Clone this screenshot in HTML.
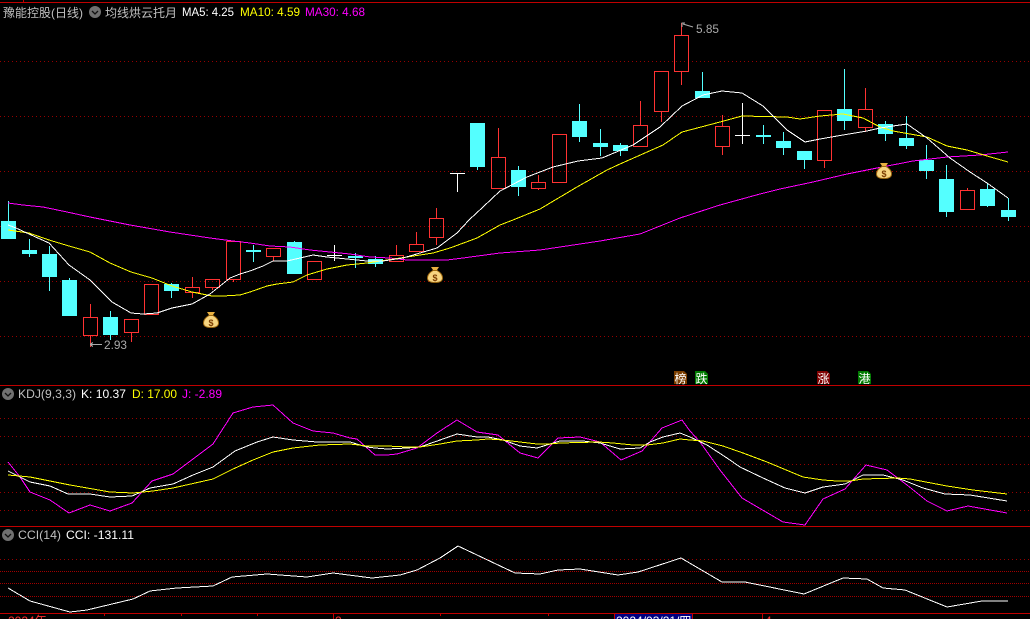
<!DOCTYPE html>
<html><head><meta charset="utf-8"><style>
html,body{margin:0;padding:0;background:#000;width:1030px;height:619px;overflow:hidden}
svg{display:block}
text{font-family:"Liberation Sans","WenQuanYi Zen Hei","Noto Sans CJK SC",sans-serif;font-size:12px}
.cn{font-family:"WenQuanYi Zen Hei","Liberation Sans","Noto Sans CJK SC",sans-serif;font-size:12px}
.g{stroke:#960000;stroke-width:1;stroke-dasharray:1 3;fill:none;shape-rendering:crispEdges}
.g2{stroke:#a00000;stroke-width:1;stroke-dasharray:1 1;fill:none;shape-rendering:crispEdges}
.l{fill:none;stroke-width:1;shape-rendering:crispEdges}
.b{stroke:#c00000;stroke-width:1;fill:none;shape-rendering:crispEdges}
</style></head><body>
<svg width="1030" height="619" viewBox="0 0 1030 619" xmlns="http://www.w3.org/2000/svg">
<rect width="1030" height="619" fill="#000"/>
<path class="g" d="M0 61.5H1030M0 116.5H1030M0 171.5H1030M0 226.5H1030M0 281.5H1030M0 336.5H1030M0 418.5H1030M0 436.5H1030M0 464.5H1030M0 492.5H1030M0 510.5H1030M0 559.5H1030"/>
<path class="g2" d="M0 571.5H1030M0 583.5H1030M0 596.5H1030"/>
<path class="b" d="M0 2.5H1030M23.5 0V2M0 385.5H1030M0 526.5H1030M0 613.5H1030M104.5 613V616M181.5 613V616M257.5 613V616M333.5 613V619M440.5 613V616M548.5 613V616M762.5 613V619"/>

<g shape-rendering="crispEdges">
<path fill="#54ffff" d="M1 221h15v18H1zM22 250h15v4H22zM42 254h15v23H42zM62 280h15v36H62zM103 317h15v18h-15zM164 284h15v7h-15zM246 250h15v2h-15zM287 242h15v32h-15zM348 256h15v2h-15zM368 259h15v5h-15zM470 123h15v44h-15zM511 170h15v17h-15zM572 121h15v16h-15zM593 143h15v4h-15zM613 145h15v6h-15zM695 91h15v7h-15zM756 135h15v2h-15zM776 141h15v7h-15zM797 151h15v9h-15zM837 109h15v12h-15zM878 124h15v10h-15zM899 138h15v8h-15zM919 160h15v11h-15zM939 179h15v33h-15zM980 189h15v17h-15zM1001 210h15v7h-15z"/>
<path stroke="#54ffff" fill="none" d="M8.5 201V239M29.5 239V257M49.5 246V291M69.5 278V316M110.5 311V340M171.5 283V298M253.5 245V262M294.5 241V274M355.5 253V268M375.5 256V267M477.5 167V170M518.5 166V196M579.5 104V142M600.5 129V156M620.5 143V156M702.5 72V98M763.5 125V144M783.5 132V155M804.5 160V169M844.5 69V130M885.5 121V141M906.5 116V149M926.5 145V179M946.5 165V217M987.5 184V207M1008.5 198V221"/>
<path stroke="#ff3232" fill="none" d="M83.5 317.5h14v18h-14zM124.5 319.5h14v13h-14zM144.5 284.5h14v30h-14zM185.5 287.5h14v5h-14zM205.5 279.5h14v8h-14zM226.5 241.5h14v38h-14zM266.5 248.5h14v8h-14zM307.5 261.5h14v18h-14zM389.5 255.5h14v6h-14zM409.5 244.5h14v7h-14zM429.5 218.5h14v19h-14zM491.5 157.5h14v31h-14zM531.5 182.5h14v6h-14zM552.5 134.5h14v48h-14zM633.5 125.5h14v21h-14zM654.5 71.5h14v40h-14zM674.5 35.5h14v36h-14zM715.5 126.5h14v20h-14zM817.5 110.5h14v50h-14zM858.5 109.5h14v18h-14zM960.5 190.5h14v19h-14zM90.5 304V317M90.5 336V347M131.5 333V342M192.5 277V287M192.5 293V298M212.5 288V290M233.5 280V282M273.5 257V261M396.5 245V255M416.5 232V244M436.5 208V218M436.5 238V245M498.5 128V157M538.5 175V182M538.5 189V190M640.5 101V125M661.5 112V122M681.5 23V35M681.5 72V85M722.5 115V126M722.5 147V155M824.5 161V168M865.5 88V109M865.5 128V132M967.5 188V190"/>
<path stroke="#fff" fill="none" d="M334.5 245V261M327 255.5H342M457.5 173V192M450 173.5H465M742.5 103V144M735 135.5H750"/>
</g>

<polyline class="l" stroke="#ff00ff" points="8,203 23,205 43,207 67,212 90,217 130,225 170,232 210,238 233,241 250,243 270,246 290,247 310,250 330,252 350,254 370,257 390,258 407,260 447,260 463,258 500,253 540,250 600,241 640,234 660,226 680,218 720,205 760,194 780,189 813,182 847,174 877,168 913,161 947,157 980,155 1008,152"/>
<polyline class="l" stroke="#ffff00" points="8,230 29,233 49,240 69,246 90,252 110,263 131,272 152,278 172,286 192,292 212,296 223,296 240,295 250,292 267,286 277,284 293,282 307,275 327,269 347,265 367,263 387,260 407,257 433,253 450,248 477,238 500,225 513,220 540,209 577,187 607,170 620,164 663,145 682,132 720,122 742,116 787,117 800,119 820,116 843,114 863,118 880,127 893,131 927,137 947,146 967,150 987,156 1008,162"/>
<polyline class="l" stroke="#ffffff" points="8,225 16,228 29,234 49,243 69,265 90,280 112,302 131,313 143,314 157,313 172,308 192,304 210,294 230,278 240,274 250,271 263,266 273,261 287,261 300,258 313,255 327,257 347,259 367,261 383,261 403,258 420,253 437,248 457,233 469,220 483,207 500,191 527,177 553,167 578,161 602,158 633,145 660,127 682,106 703,95 722,91 742,93 763,106 787,130 805,142 820,139 843,135 867,131 880,128 893,126 907,124 927,138 950,158 970,172 987,183 1008,198"/>

<!-- KDJ -->
<polyline class="l" stroke="#ff00ff" points="8,462 20,477 30,492 50,500 69,513 90,505 110,511 132,503 152,481 173,474 213,444 233,413 253,407 273,405 293,423 313,431 333,433 350,438 357,439 375,455 387,455 397,454 417,448 437,433 457,420 477,432 498,435 520,453 538,458 558,438 580,437 600,442 621,460 642,451 662,428 682,420 690,431 700,442 720,470 742,498 783,522 805,525 823,499 845,489 866,465 887,470 907,485 927,501 947,511 968,506 1007,513"/>
<polyline class="l" stroke="#ffffff" points="8,471 30,482 50,486 68,494 90,494 110,497 132,496 150,488 173,484 193,475 213,467 235,451 257,442 273,437 293,440 317,442 350,442 367,447 375,448 387,449 407,448 420,447 440,440 457,434 477,437 488,437 503,440 520,446 537,448 550,444 560,441 583,441 600,443 620,449 640,448 650,442 663,437 680,433 690,437 707,445 727,458 740,467 763,478 785,488 805,493 823,487 845,484 863,475 883,475 903,480 923,488 945,494 970,495 1007,501"/>
<polyline class="l" stroke="#ffff00" points="8,475 30,477 70,485 110,492 133,493 153,491 173,488 213,479 233,469 253,460 273,452 293,448 320,445 350,444 367,446 387,446 407,447 420,447 440,444 457,441 477,440 488,439 503,440 520,442 537,444 550,444 560,443 598,442 613,443 633,445 647,445 663,443 680,439 690,440 703,441 723,446 743,453 767,462 803,477 823,480 837,481 850,481 863,479 897,478 910,479 947,486 973,490 1007,494"/>

<!-- CCI -->
<polyline class="l" stroke="#ffffff" points="8,588 30,601 70,612 87,610 133,599 150,591 177,588 213,586 232,577 267,574 307,577 333,573 372,578 400,575 417,570 440,558 458,546 515,573 540,574 558,570 580,569 618,575 638,572 681,558 722,582 745,582 804,594 843,578 867,579 883,588 905,590 947,607 982,601 1008,601"/>

<!-- money bags -->
<g>
<path fill="#e8b040" d="M207 312h8l-2 3h-4z"/>
<path fill="#f6d480" stroke="#a06a10" d="M209 315.500h4c3.500 2 5.500 5 5.500 7.500 0 3-3 4.500-7.500 4.500s-7.500-1.500-7.500-4.500c0-2.500 2-5.500 5.500-7.500z"/>
<text x="211" y="326" text-anchor="middle" fill="#7a3c00" style="font-size:9px;font-weight:bold">$</text>
</g>
<g>
<path fill="#e8b040" d="M431 267h8l-2 3h-4z"/>
<path fill="#f6d480" stroke="#a06a10" d="M433 270.500h4c3.500 2 5.500 5 5.500 7.500 0 3-3 4.500-7.500 4.500s-7.500-1.500-7.500-4.500c0-2.500 2-5.500 5.500-7.500z"/>
<text x="435" y="281" text-anchor="middle" fill="#7a3c00" style="font-size:9px;font-weight:bold">$</text>
</g>
<g>
<path fill="#e8b040" d="M880 163h8l-2 3h-4z"/>
<path fill="#f6d480" stroke="#a06a10" d="M882 166.500h4c3.500 2 5.500 5 5.500 7.500 0 3-3 4.500-7.500 4.500s-7.500-1.500-7.500-4.500c0-2.500 2-5.500 5.500-7.500z"/>
<text x="884" y="177" text-anchor="middle" fill="#7a3c00" style="font-size:9px;font-weight:bold">$</text>
</g>

<!-- header -->
<text class="cn" x="3" y="17" fill="#c0c0c0" textLength="80" lengthAdjust="spacing">豫能控股(日线)</text>
<circle cx="95" cy="12" r="6" fill="#707070"/><path d="M92 11l3 3 3-3" fill="none" stroke="#111" stroke-width="1.300"/>
<text class="cn" x="105" y="17" fill="#c0c0c0" textLength="72" lengthAdjust="spacing">均线烘云托月</text>
<text x="182" y="16" fill="#fff" textLength="52" lengthAdjust="spacingAndGlyphs">MA5: 4.25</text>
<text x="240" y="16" fill="#ff0" textLength="60" lengthAdjust="spacingAndGlyphs">MA10: 4.59</text>
<text x="305" y="16" fill="#f0f" textLength="60" lengthAdjust="spacingAndGlyphs">MA30: 4.68</text>

<!-- price markers -->
<path d="M90 344.500H102M90 344.500l3-2M90 344.500l3 2" stroke="#aaa" fill="none" shape-rendering="crispEdges"/>
<text x="104" y="349" fill="#aaa" textLength="23" lengthAdjust="spacingAndGlyphs">2.93</text>
<path d="M682 27V23h3M683 24l10 3" stroke="#aaa" fill="none"/>
<text x="696" y="33" fill="#aaa" textLength="23" lengthAdjust="spacingAndGlyphs">5.85</text>

<!-- tags -->
<path fill="#7a3e00" d="M674 371h10l3 3v10h-13z"/><text class="cn" x="674.500" y="383" fill="#fff">榜</text>
<path fill="#007a00" d="M695 371h10l3 3v10h-13z"/><text class="cn" x="695.500" y="383" fill="#fff">跌</text>
<path fill="#800000" d="M817 371h10l3 3v10h-13z"/><text class="cn" x="817.500" y="383" fill="#fff">涨</text>
<path fill="#007a00" d="M858 371h10l3 3v10h-13z"/><text class="cn" x="858.500" y="383" fill="#fff">港</text>

<!-- KDJ header -->
<circle cx="8" cy="394" r="6" fill="#707070"/><path d="M5 393l3 3 3-3" fill="none" stroke="#111" stroke-width="1.300"/>
<text x="18" y="398" fill="#c0c0c0" textLength="58" lengthAdjust="spacingAndGlyphs">KDJ(9,3,3)</text>
<text x="81" y="398" fill="#fff" textLength="45" lengthAdjust="spacingAndGlyphs">K: 10.37</text>
<text x="132" y="398" fill="#ff0" textLength="45" lengthAdjust="spacingAndGlyphs">D: 17.00</text>
<text x="182" y="398" fill="#f0f" textLength="40" lengthAdjust="spacingAndGlyphs">J: -2.89</text>

<!-- CCI header -->
<circle cx="8" cy="535" r="6" fill="#707070"/><path d="M5 534l3 3 3-3" fill="none" stroke="#111" stroke-width="1.300"/>
<text x="18" y="539" fill="#c0c0c0" textLength="43" lengthAdjust="spacingAndGlyphs">CCI(14)</text>
<text x="66" y="539" fill="#fff" textLength="68" lengthAdjust="spacingAndGlyphs">CCI: -131.11</text>

<!-- axis -->
<text x="8" y="625" fill="#ff3232">2024年</text>
<text x="335" y="625" fill="#ff3232">2</text>
<text x="765" y="625" fill="#ff3232">4</text>
<rect x="614.500" y="613.500" width="78" height="6" fill="#000080" stroke="#c00000"/>
<text x="616" y="625" fill="#fff">2024/03/21/四</text>
</svg>
</body></html>
